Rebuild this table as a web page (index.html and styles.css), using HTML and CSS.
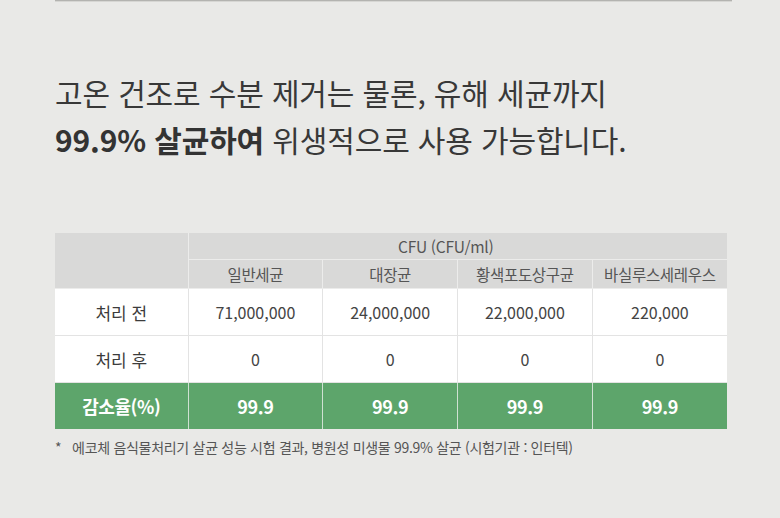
FILE: index.html
```html
<!DOCTYPE html>
<html lang="ko">
<head>
<meta charset="utf-8">
<link rel="stylesheet" href="styles.css">
</head>
<body>
<div class="page">
  <div class="topline"></div>
  <h1 class="headline">
    <span class="line">고온 건조로 수분 제거는 물론, 유해 세균까지</span>
    <span class="line"><strong>99.9% 살균하여</strong> 위생적으로 사용 가능합니다.</span>
  </h1>
  <table class="data">
    <colgroup>
      <col class="c0"><col class="c1"><col class="c1"><col class="c1"><col class="c1">
    </colgroup>
    <thead>
      <tr class="h1">
        <th rowspan="2" class="blank"></th>
        <th colspan="4" class="cfu">CFU (CFU/ml)</th>
      </tr>
      <tr class="h2">
        <th>일반세균</th>
        <th>대장균</th>
        <th>황색포도상구균</th>
        <th>바실루스세레우스</th>
      </tr>
    </thead>
    <tbody>
      <tr class="row">
        <th>처리 전</th>
        <td>71,000,000</td>
        <td>24,000,000</td>
        <td>22,000,000</td>
        <td>220,000</td>
      </tr>
      <tr class="row">
        <th>처리 후</th>
        <td>0</td>
        <td>0</td>
        <td>0</td>
        <td>0</td>
      </tr>
      <tr class="green">
        <th>감소율(%)</th>
        <td>99.9</td>
        <td>99.9</td>
        <td>99.9</td>
        <td>99.9</td>
      </tr>
    </tbody>
  </table>
  <p class="note">*&nbsp;&nbsp;&nbsp;에코체 음식물처리기 살균 성능 시험 결과, 병원성 미생물 99.9% 살균 (시험기관 : 인터텍)</p>
</div>
</body>
</html>
```
FILE: styles.css
```css
html, body {
  margin: 0;
  padding: 0;
  background: #e9e9e7;
}
body {
  font-family: "Noto Sans CJK KR", "Noto Sans", sans-serif;
  color: #333;
  width: 780px;
  height: 518px;
  overflow: hidden;
}
.page {
  padding: 0 48px 0 55px;
}
.topline {
  height: 1px;
  background: #b3b3b0;
  border-bottom: 1px solid #d6d6d3;
}
.headline {
  margin: 67px 0 0 0;
  font-size: 30px;
  font-weight: 400;
  line-height: 47px;
  letter-spacing: -0.15px;
  color: #383838;
}
.headline .line {
  display: block;
}
.headline strong {
  font-weight: 700;
  color: #333;
}
.data {
  margin-top: 70px;
  width: 672px;
  border-collapse: collapse;
  border-style: hidden;
  table-layout: fixed;
  text-align: center;
}
.data .c0 { width: 133px; }
.data th, .data td {
  padding: 0;
  font-weight: 400;
}
.data thead th {
  background: #d9d9d8;
  color: #555;
  font-size: 15.5px;
  border: 1px solid #ececeb;
  letter-spacing: -0.3px;
}
.data .h1 th { height: 26px; }
.data .h1 .cfu { padding-right: 24px; }
.data .h2 th { height: 28px; }
.data .row th, .data .row td {
  background: #fff;
  height: 46px;
  border: 1px solid #e3e3e3;
  color: #444;
}
.data .row td {
  font-size: 16px;
}
.data .row th {
  font-size: 17px;
  color: #3c3c3c;
}
.data .green th, .data .green td {
  background: #5da56b;
  color: #fff;
  height: 46px;
  border: 1px solid #cfe1d2;
  font-weight: 700;
  font-size: 18px;
  letter-spacing: -0.4px;
}
.note {
  margin: 8px 0 0 0;
  font-size: 14px;
  color: #555;
  letter-spacing: -0.3px;
}
```
